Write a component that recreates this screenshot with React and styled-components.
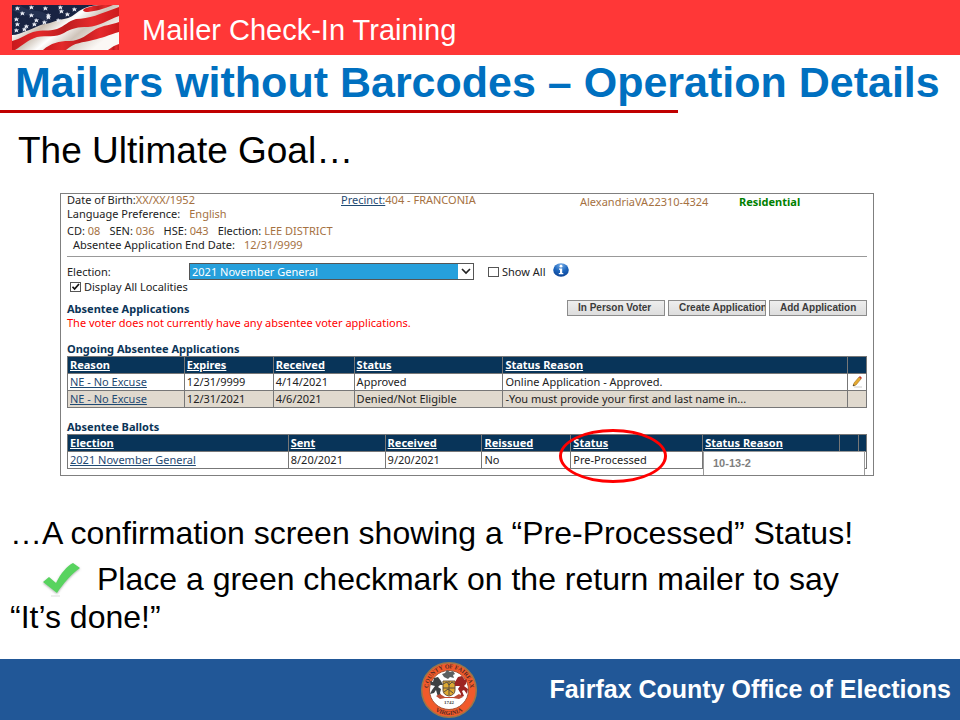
import React from "react";
import styled, { createGlobalStyle, css } from "styled-components";

const GlobalStyle = createGlobalStyle`
  *, *::before, *::after { box-sizing: border-box; }
  body {
    margin: 0;
    background: #fff;
    color: #000;
    font-family: "Liberation Sans", Arial, sans-serif;
  }
`;

const Slide = styled.div`
  display: flex;
  flex-direction: column;
  min-height: 100vh;
`;

const TopBar = styled.header`
  display: flex;
  align-items: center;
  gap: 23px;
  padding: 5px 12px;
  background: #ff3737;
  color: #fff;
`;

const FlagArt = styled.svg`
  display: block;
  width: 107px;
  height: 45px;
`;

const CourseName = styled.p`
  margin: 0;
  padding-top: 5px;
  font-size: 29px;
  line-height: 32px;
`;

const Title = styled.h1`
  margin: 0;
  padding: 2px 15px 0;
  font-size: 43px;
  line-height: 50px;
  color: #0070c0;
  white-space: nowrap;
`;

const TitleRule = styled.hr`
  width: 70.6%;
  height: 3px;
  margin: 3px 0 0;
  border: 0;
  background: #c00000;
`;

const Main = styled.main`
  flex: 1;
`;

const Goal = styled.h2`
  margin: 17px 0 0;
  padding: 0 18px;
  font-size: 37px;
  font-weight: 400;
  line-height: 42px;
`;

const Panel = styled.section`
  position: relative;
  margin: 21px 86px 0 60px;
  padding: 0 6px 6px;
  border: 1px solid #7f7f7f;
  color: #222;
  font-family: "Noto Sans", "Open Sans", sans-serif;
  font-size: 11px;
  line-height: 14px;
`;

const VoterGrid = styled.div`
  display: grid;
  grid-template-columns: 274fr 239fr 159fr 128fr;
  margin-top: -1px;
`;

const Cell = styled.div`
  padding-top: ${(p) => (p.$low ? "2px" : "0")};
  white-space: nowrap;
`;

const Line = styled.div`
  display: flex;
  gap: ${(p) => p.$gap || 0}px;
  padding-left: ${(p) => p.$indent || 0}px;
  white-space: nowrap;
`;

const Districts = styled.div`
  margin-top: 3px;
  padding-bottom: 4px;
  border-bottom: 1px solid #999;
`;

const Value = styled.span`
  color: #a5713f;
`;

const Residential = styled.strong`
  color: #008000;
`;

const Link = styled.a`
  color: #1f4a73;
  text-decoration: underline;
`;

const Filters = styled.div`
  display: flex;
  align-items: center;
  height: 17px;
  margin-top: 6px;
`;

const FilterLabel = styled.label`
  width: 122px;
`;

const SelectBox = styled.div`
  position: relative;
  width: 285px;
  height: 17px;
  margin-right: 14px;
`;

const Select = styled.select`
  display: block;
  width: 100%;
  height: 100%;
  padding: 0 2px;
  appearance: none;
  border: 1px solid #555;
  border-radius: 0;
  background: linear-gradient(to left, #fff 15px, #26a0dc 15px);
  color: #fff;
  font: inherit;
`;

const SelectArrow = styled.svg`
  position: absolute;
  top: 5px;
  right: 3px;
  width: 10px;
  height: 7px;
  pointer-events: none;
`;

const CheckLabel = styled.label`
  display: flex;
  align-items: center;
  gap: 3px;
  padding-left: ${(p) => p.$indent || 0}px;
`;

const Check = styled.input`
  width: 11px;
  height: 10px;
  margin: 0;
  appearance: none;
  border: 1px solid #555;
  background: #fff;
`;

const CheckFrame = styled.span`
  position: relative;
  display: flex;
`;

const CheckTick = styled.svg`
  position: absolute;
  inset: 0;
  width: 11px;
  height: 10px;
  pointer-events: none;
`;

const InfoIcon = styled.svg`
  width: 16px;
  height: 14px;
  margin: 0 0 4px 8px;
`;

const ApplicationsRow = styled.div`
  display: flex;
  justify-content: space-between;
  align-items: flex-start;
  margin-top: 6px;
`;

const ApplicationsText = styled.div`
  padding-top: 2px;
`;

const Heading = styled.h3`
  margin: ${(p) => p.$top || 0}px 0 0;
  font-size: 11px;
  line-height: 14px;
  color: #0b3457;
`;

const Warning = styled.p`
  margin: 0;
  color: #ff0000;
`;

const Actions = styled.div`
  display: flex;
  gap: 3px;
`;

const ActionButton = styled.button`
  width: 98px;
  height: 16px;
  padding: 0 0 0 10px;
  overflow: hidden;
  border: 1px solid #8c8c8c;
  background: linear-gradient(#eee, #ddd);
  color: #3b3b3b;
  font: bold 10px/12px "Liberation Sans", Arial, sans-serif;
  text-align: left;
  white-space: nowrap;
`;

const Table = styled.table`
  width: 100%;
  table-layout: fixed;
  border-collapse: collapse;
  border: 1px solid #777;
`;

const tableCell = css`
  height: 17px;
  padding: 1px 2px;
  border: 1px solid #777;
  line-height: 14px;
  text-align: left;
  white-space: nowrap;
`;

const Th = styled.th`
  ${tableCell}
  background: #083459;
  color: #fff;
  text-decoration: underline;
`;

const Td = styled.td`
  ${tableCell}
`;

const Tr = styled.tr`
  background: ${(p) => (p.$shaded ? "#e0d9ce" : "#fff")};
`;

const Pencil = styled.svg`
  display: block;
  width: 12px;
  height: 12px;
  margin: 0 auto;
`;

const Note = styled.div`
  position: absolute;
  right: 8px;
  bottom: 0;
  width: 162px;
  height: 24px;
  padding: 4px 9px;
  border: 1px solid #999;
  border-bottom: 0;
  background: #fff;
  color: #7f7f7f;
  font: bold 11px/14px "Liberation Sans", Arial, sans-serif;
`;

const Ring = styled.div`
  position: absolute;
  right: 206px;
  bottom: -8px;
  width: 108px;
  height: 54px;
  border: 3px solid #ff0000;
  border-radius: 50%;
`;

const Outcome = styled.p`
  margin: ${(p) => p.$top}px 0 0;
  padding: 0 70px 0 10px;
  font-size: 32px;
  line-height: 38px;
`;

const CheckArt = styled.svg`
  width: 42px;
  height: 36px;
  margin: 0 15px 0 30px;
  vertical-align: -8px;
`;

const Footer = styled.footer`
  display: grid;
  grid-template-columns: minmax(0, 420fr) 58px minmax(0, 473fr);
  align-items: center;
  height: 61px;
  padding-right: 9px;
  background: #215797;
  color: #fff;
`;

const SealArt = styled.svg`
  grid-column: 2;
  width: 58px;
  height: 58px;
`;

const Office = styled.strong`
  justify-self: end;
  padding-bottom: 2px;
  font-size: 25px;
  line-height: 30px;
  white-space: nowrap;
`;

const starRows = [
  [3, 1], [17, 0], [31, 1], [46, 0], [60, 2],
  [8, 6], [17, 8], [34, 8], [47, 4], [53, 7],
  [2, 12], [22, 13], [34, 10], [44, 13],
  [3, 17], [12, 19], [20, 17], [30, 15], [2, 23], [10, 22],
];

function Flag() {
  return (
    <FlagArt viewBox="0 0 107 45" role="img" aria-label="American flag">
      <defs>
        <linearGradient id="cloth" x1="0" y1="0" x2="1" y2=".5">
          <stop offset="0" stopColor="#d8cfc6" />
          <stop offset=".25" stopColor="#fff" />
          <stop offset=".42" stopColor="#c9bdb0" />
          <stop offset=".58" stopColor="#fff" />
          <stop offset=".75" stopColor="#cfc4ba" />
          <stop offset="1" stopColor="#fbf8f5" />
        </linearGradient>
        <linearGradient id="stripe" x1="0" y1="0" x2="1" y2="0">
          <stop offset="0" stopColor="#c8191c" />
          <stop offset=".25" stopColor="#e3292b" />
          <stop offset=".5" stopColor="#bd1c1e" />
          <stop offset=".75" stopColor="#e52a2c" />
          <stop offset="1" stopColor="#cd1b1d" />
        </linearGradient>
        <clipPath id="flagEdge"><path d="M0 0H107V45H0Z" /></clipPath>
      </defs>
      <g clipPath="url(#flagEdge)">
        <path d="M0 0H107V45H0Z" fill="url(#cloth)" />
        <g fill="url(#stripe)">
          <path d="M0 36C9 34 14 29 21 27C31 24 36 27 45 24C53 21 56 16 64 14C77 14 88 9 107 2V11C96 15 87 21 76 22C66 22 60 23 52 28C43 33 35 30 25 32C16 35 11 40 3 45H0Z" />
          <path d="M31 45C39 38 47 36 57 36C69 36 75 29 84 24C92 20 99 20 107 17V27C97 30 90 33 81 35C70 38 63 37 54 45Z" />
          <path d="M96 45C100 42 103 40 107 39V45Z" />
          <path d="M74 3C80 1 84 0 90 0H101C91 4 84 6 76 7C71 7 69 5 74 3Z" />
        </g>
        <path d="M0 0H85C77 1 72 3 67 6C62 10 58 13 52 14C44 15 40 18 33 19C26 20 21 24 14 26C9 28 5 30 0 30Z" fill="#182342" />
        <path d="M8 0C18 9 29 2 38 12L35 18C26 9 14 13 0 5Z" fill="#344363" opacity=".45" />
        <g fill="#e8ebf4">
          {starRows.map(([x, y]) => (
            <path
              key={`${x}-${y}`}
              transform={`translate(${x} ${y})`}
              d="M2 0L3 1.4L5 1.3L3.7 2.7L4.4 4.5L2.4 3.6L.6 4.7L1 2.8L0 1.4H1.5Z"
            />
          ))}
        </g>
      </g>
    </FlagArt>
  );
}

function Seal() {
  return (
    <SealArt viewBox="0 0 58 58" role="img" aria-label="County of Fairfax, Virginia seal">
      <defs>
        <path id="upperArc" d="M8.5 33A21 21 0 1 1 49.5 33" />
        <path id="lowerArc" d="M9 44A25 25 0 0 0 49 44" />
      </defs>
      <circle cx="29" cy="29" r="27.3" fill="#f15a2b" stroke="#987749" strokeWidth="1.5" />
      <circle cx="29" cy="29" r="19.5" fill="#fff" stroke="#a45335" />
      <g fill="#552b25" fontFamily="Liberation Serif" fontWeight="bold" fontSize="6" textAnchor="middle">
        <text><textPath href="#upperArc" startOffset="50%">COUNTY OF FAIRFAX</textPath></text>
        <text><textPath href="#lowerArc" startOffset="50%">VIRGINIA</textPath></text>
        <text x="29" y="43" fontSize="5" fill="#444">1742</text>
      </g>
      <path d="M23 20H35V29Q35 34 29 35Q23 34 23 29Z" fill="#dda932" stroke="#68533a" />
      <path d="M23 23L27 21L29 24L32 21L35 23M23 27H35M29 20V34M24 31L28 28L33 32" fill="none" stroke="#594d42" />
      <path d="M24 16L22 13L25 12L27 9L30 11L33 10L35 13L33 14L34 17L30 16L28 18Z" fill="#5b6061" />
      <path d="M21 20L18 16L14 17L13 21L10 20L11 24L15 25L12 29L10 33L14 32L16 29L18 36H22L20 32L21 28L18 26L20 24L23 24Z" fill="#3e4143" />
      <path d="M35 21L38 16L42 15L45 19L47 18L46 23L44 25L48 28L47 33L44 29L42 30L44 35L39 37L41 33L38 28L40 25L35 25Z" fill="#9c2522" />
      <path d="M16 35L20 33L25 36H34L39 33L43 36L39 38L33 37H25L20 38Z" fill="#bd4a33" />
    </SealArt>
  );
}

function TextCheck({ id, label, defaultChecked, indent }) {
  return (
    <CheckLabel htmlFor={id} $indent={indent}>
      <CheckFrame>
        <Check id={id} type="checkbox" defaultChecked={defaultChecked} />
        {defaultChecked && (
          <CheckTick viewBox="0 0 11 10" aria-hidden="true">
            <path d="M2.5 4.7L4.6 7L9 2" fill="none" stroke="#111" strokeWidth="1.7" />
          </CheckTick>
        )}
      </CheckFrame>
      {label}
    </CheckLabel>
  );
}

const Column = styled.col`
  width: ${(p) => p.$share / 8}%;
`;

function DataTable({ label, widths, headers, rows }) {
  return (
    <Table aria-label={label}>
      <colgroup>
        {widths.map((w, i) => <Column key={i} $share={w} />)}
      </colgroup>
      <thead>
        <tr>{headers.map((h, i) => <Th key={i} scope="col">{h}</Th>)}</tr>
      </thead>
      <tbody>
        {rows.map((row, i) => (
          <Tr key={i} $shaded={i % 2 === 1}>
            {row.map((c, j) => <Td key={j}>{j === 0 ? <Link href="#">{c}</Link> : c}</Td>)}
          </Tr>
        ))}
      </tbody>
    </Table>
  );
}

const editIcon = (
  <Pencil viewBox="0 0 12 12" role="img" aria-label="Edit">
    <path d="M3 11H11" stroke="#ccc" />
    <path d="M2 10L3 7L8 1L10 3L5 9Z" fill="#e5a92e" stroke="#a57420" strokeWidth=".6" />
    <path d="M8 1L9 0L11 2L10 3Z" fill="#c93425" />
    <path d="M2 10L2.6 8.3L3.7 9.4Z" fill="#333" />
  </Pencil>
);

export default function App() {
  return (
    <Slide>
      <GlobalStyle />
      <TopBar>
        <Flag />
        <CourseName>Mailer Check-In Training</CourseName>
      </TopBar>
      <Main>
        <Title>Mailers without Barcodes – Operation Details</Title>
        <TitleRule />
        <Goal>The Ultimate Goal…</Goal>
        <Panel>
          <VoterGrid>
            <Cell>
              <Line>Date of Birth:<Value>XX/XX/1952</Value></Line>
              <Line $gap={9}>Language Preference: <Value>English</Value></Line>
            </Cell>
            <Cell><Link href="#">Precinct:</Link><Value>404 - FRANCONIA</Value></Cell>
            <Cell $low><Value>AlexandriaVA22310-4324</Value></Cell>
            <Cell $low><Residential>Residential</Residential></Cell>
          </VoterGrid>
          <Districts>
            <Line $gap={9}>
              <span>CD: <Value>08</Value></span>
              <span>SEN: <Value>036</Value></span>
              <span>HSE: <Value>043</Value></span>
              <span>Election: <Value>LEE DISTRICT</Value></span>
            </Line>
            <Line $gap={9} $indent={6}>Absentee Application End Date: <Value>12/31/9999</Value></Line>
          </Districts>
          <Filters>
            <FilterLabel htmlFor="election">Election:</FilterLabel>
            <SelectBox>
              <Select id="election" defaultValue="general">
                <option value="general">2021 November General</option>
              </Select>
              <SelectArrow viewBox="0 0 10 7" aria-hidden="true">
                <path d="M1 1L5 5L9 1" fill="none" stroke="#222" strokeWidth="1.7" />
              </SelectArrow>
            </SelectBox>
            <TextCheck id="show-all" label="Show All" />
            <InfoIcon viewBox="0 0 16 14" role="img" aria-label="Information">
              <defs>
                <radialGradient id="infoBlue" cx=".5" cy=".15" r=".9">
                  <stop offset="0" stopColor="#78aee8" />
                  <stop offset=".5" stopColor="#1d66bd" />
                  <stop offset="1" stopColor="#0a3f91" />
                </radialGradient>
              </defs>
              <ellipse cx="8" cy="7" rx="7.8" ry="6.8" fill="url(#infoBlue)" />
              <circle cx="8" cy="3.2" r="1.4" fill="#fff" />
              <path d="M6 5.5H9.2V10H10.3V11.3H5.8V10H7V6.7H6Z" fill="#fff" />
            </InfoIcon>
          </Filters>
          <TextCheck id="localities" label="Display All Localities" defaultChecked indent={3} />
          <ApplicationsRow>
            <ApplicationsText>
              <Heading>Absentee Applications</Heading>
              <Warning>The voter does not currently have any absentee voter applications.</Warning>
            </ApplicationsText>
            <Actions>
              <ActionButton type="button">In Person Voter</ActionButton>
              <ActionButton type="button">Create Application</ActionButton>
              <ActionButton type="button">Add Application</ActionButton>
            </Actions>
          </ApplicationsRow>
          <Heading $top={12}>Ongoing Absentee Applications</Heading>
          <DataTable
            label="Ongoing Absentee Applications"
            widths={[117, 89, 81, 149, 345, 19]}
            headers={["Reason", "Expires", "Received", "Status", "Status Reason", ""]}
            rows={[
              ["NE - No Excuse", "12/31/9999", "4/14/2021", "Approved", "Online Application - Approved.", editIcon],
              ["NE - No Excuse", "12/31/2021", "4/6/2021", "Denied/Not Eligible", "-You must provide your first and last name in...", ""],
            ]}
          />
          <Heading $top={12}>Absentee Ballots</Heading>
          <DataTable
            label="Absentee Ballots"
            widths={[221, 97, 97, 89, 132, 137, 19, 8]}
            headers={["Election", "Sent", "Received", "Reissued", "Status", "Status Reason", "", ""]}
            rows={[["2021 November General", "8/20/2021", "9/20/2021", "No", "Pre-Processed", "", "", ""]]}
          />
          <Note>10-13-2</Note>
          <Ring />
        </Panel>
        <Outcome $top={38}>…A confirmation screen showing a “Pre-Processed” Status!</Outcome>
        <Outcome $top={8}>
          <CheckArt viewBox="0 0 42 36" role="img" aria-label="Green checkmark">
            <defs>
              <filter id="checkShadow" x="-20%" y="-20%" width="140%" height="150%">
                <feDropShadow dx="0" dy="1" stdDeviation="1.3" floodColor="#777" floodOpacity=".6" />
              </filter>
            </defs>
            <path d="M3 20L9 15L16 21C21 11 27 4 33 1L40 6C31 12 23 22 17 31Z" fill="#58d35f" filter="url(#checkShadow)" />
            <path d="M11 34H20" stroke="#ddd" />
          </CheckArt>
          Place a green checkmark on the return mailer to say “It’s done!”
        </Outcome>
      </Main>
      <Footer>
        <Seal />
        <Office>Fairfax County Office of Elections</Office>
      </Footer>
    </Slide>
  );
}
